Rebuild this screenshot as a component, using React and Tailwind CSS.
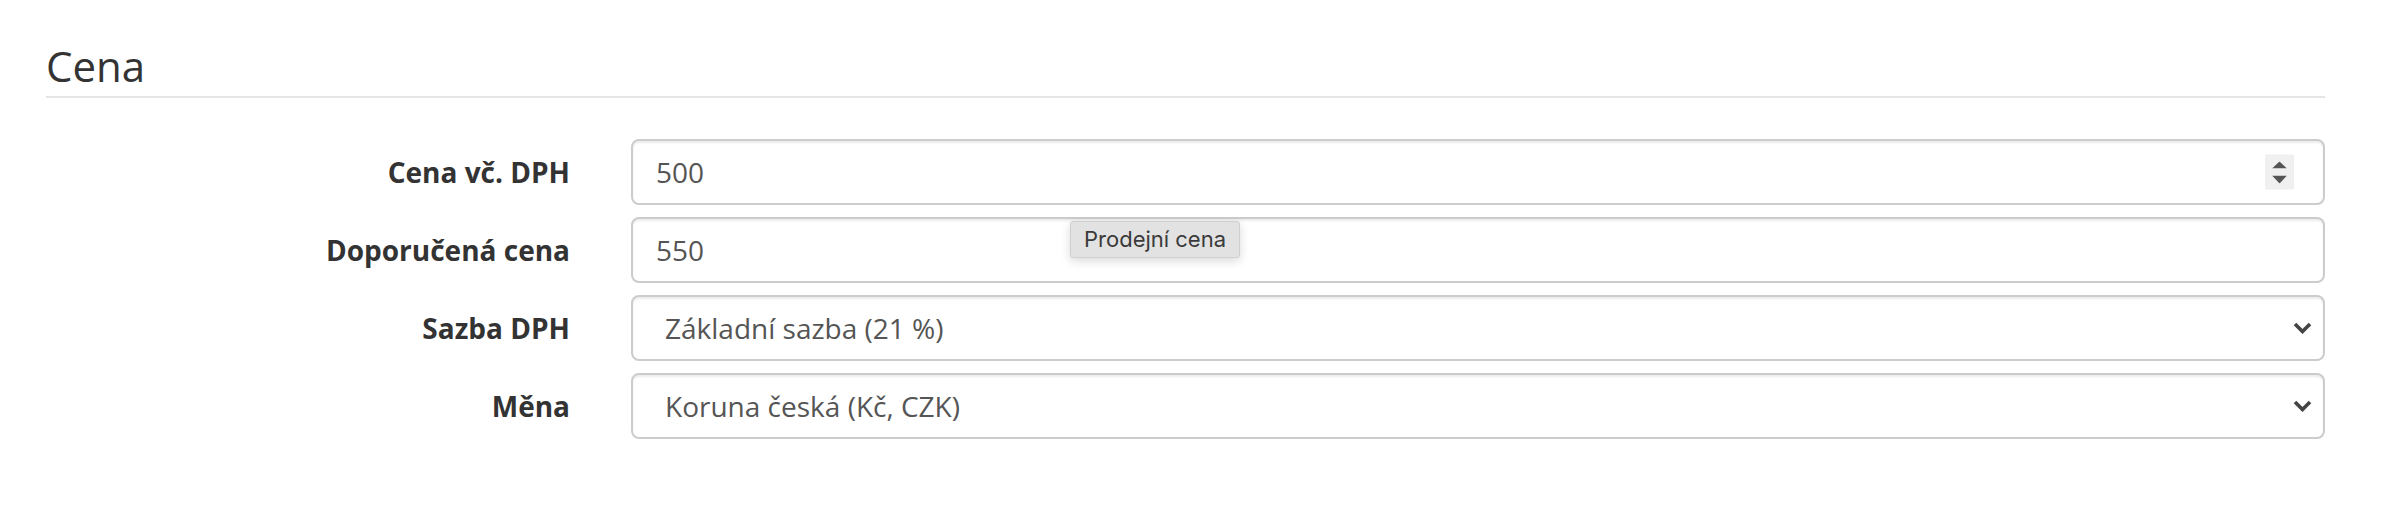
import React from 'react';

const Spinner = () => (
    <div className="absolute right-[29px] top-1/2 -translate-y-1/2 w-[29px] h-[35px] bg-[#f0f0f0] flex flex-col items-center justify-center gap-[7px]">
        <svg width="15" height="7" viewBox="0 0 15 7"><polygon points="7.5,0 15,7 0,7" fill="#555" /></svg>
        <svg width="15" height="8" viewBox="0 0 15 8"><polygon points="0,0 15,0 7.5,8" fill="#555" /></svg>
    </div>
);

const Chevron = () => (
    <svg className="absolute right-[11px] top-1/2 -translate-y-1/2" width="19" height="12" viewBox="0 0 19 12">
        <polyline points="2,2 9.5,9.5 17,2" fill="none" stroke="#444" strokeWidth="3.6" strokeLinecap="butt" />
    </svg>
);

const Row = ({ label, children }) => (
    <div className="flex items-center">
        <div className="w-[524px] text-right font-bold text-[28px] leading-[38px] text-[#333]">{label}</div>
        <div className="ml-[61px] flex-1 h-[66px] relative flex items-center border-2 border-[#cccccc] rounded-[8px] bg-white shadow-[inset_0_2px_2px_rgba(0,0,0,0.075)] text-[28px] text-[#555]">
            {children}
        </div>
    </div>
);

export default function App() {
    return (
        <div className="bg-white w-full h-[530px] pl-[46px] pr-[77px] pt-[41px] font-['Open_Sans',sans-serif]">
            <h3 className="text-[42px] leading-[50px] font-normal text-[#333] pb-[5px] border-b-2 border-[#e5e5e5]">Cena</h3>

            <div className="mt-[41px] flex flex-col gap-[12px]">
                <Row label="Cena vč. DPH">
                    <span className="pl-[23px]">500</span>
                    <Spinner />
                </Row>
                <Row label="Doporučená cena">
                    <span className="pl-[23px]">550</span>
                    {/* tooltip over the field */}
                    <div className="absolute left-[437px] top-[2px] h-[37px] px-[13px] flex items-center bg-[#e2e2e2] border border-[#d0d0d0] rounded-[3px] shadow-[0_3px_10px_rgba(0,0,0,0.15)] font-['Inter',sans-serif] text-[22px] text-[#3a3a3a]">
                        Prodejní cena
                    </div>
                </Row>
                <Row label="Sazba DPH">
                    <span className="pl-[32px]">Základní sazba (21 %)</span>
                    <Chevron />
                </Row>
                <Row label="Měna">
                    <span className="pl-[32px]">Koruna česká (Kč, CZK)</span>
                    <Chevron />
                </Row>
            </div>
        </div>
    );
}
